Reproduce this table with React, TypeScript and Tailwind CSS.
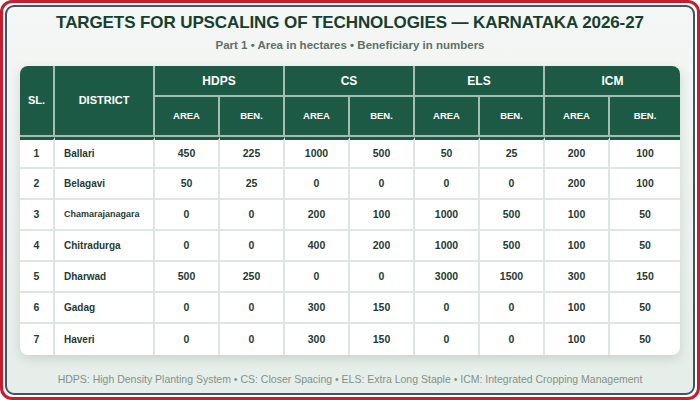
import React from "react";

type Row = { sl: number; name: string; small?: boolean; v: number[] };

const rows: Row[] = [
  { sl: 1, name: "Ballari", v: [450, 225, 1000, 500, 50, 25, 200, 100] },
  { sl: 2, name: "Belagavi", v: [50, 25, 0, 0, 0, 0, 200, 100] },
  { sl: 3, name: "Chamarajanagara", small: true, v: [0, 0, 200, 100, 1000, 500, 100, 50] },
  { sl: 4, name: "Chitradurga", v: [0, 0, 400, 200, 1000, 500, 100, 50] },
  { sl: 5, name: "Dharwad", v: [500, 250, 0, 0, 3000, 1500, 300, 150] },
  { sl: 6, name: "Gadag", v: [0, 0, 300, 150, 0, 0, 100, 50] },
  { sl: 7, name: "Haveri", v: [0, 0, 300, 150, 0, 0, 100, 50] },
];

const groups = ["HDPS", "CS", "ELS", "ICM"];

export default function App() {
  return (
    <div
      className="w-[700px] h-[400px] bg-white border-[3px] border-[#c41f30] rounded-[12px] p-[2px]"
      style={{ fontFamily: '"Liberation Sans", Arial, sans-serif' }}
    >
      <div className="w-full h-full border-2 border-[#44535f] rounded-[9px] bg-gradient-to-b from-[#f4f7f5] to-[#e6eee9] flex flex-col items-center">
        <h1 className="mt-[5px] text-[17px] leading-[22px] font-bold tracking-[-0.1px] text-[#173e2f] text-center">
          TARGETS FOR UPSCALING OF TECHNOLOGIES — KARNATAKA 2026-27
        </h1>
        <p className="mt-[3px] text-[11.5px] leading-[16px] font-bold text-[#5f7068] text-center">
          Part 1 • Area in hectares • Beneficiary in numbers
        </p>
        <div className="mt-[13px] w-[660px] rounded-[8px] overflow-hidden bg-white shadow-[0_4px_12px_rgba(30,70,50,0.16)]">
          <table className="w-full table-fixed border-separate border-spacing-0">
            <colgroup>
              <col className="w-[35px]" />
              <col className="w-[100px]" />
              <col className="w-[65px]" />
              <col className="w-[65px]" />
              <col className="w-[65px]" />
              <col className="w-[65px]" />
              <col className="w-[65px]" />
              <col className="w-[65px]" />
              <col className="w-[65px]" />
              <col />
            </colgroup>
            <thead className="bg-[#1d5a45] text-white">
              <tr>
                <th
                  rowSpan={2}
                  className="border-r-2 border-b-2 border-[#a4bfb2] text-[11px] font-bold p-0"
                >
                  SL.
                </th>
                <th
                  rowSpan={2}
                  className="border-r-2 border-b-2 border-[#a4bfb2] text-[11px] font-bold p-0"
                >
                  DISTRICT
                </th>
                {groups.map((g, i) => (
                  <th
                    key={g}
                    colSpan={2}
                    className={`h-[31px] border-b-2 border-[#a4bfb2] text-[12px] font-bold p-0 ${
                      i < 3 ? "border-r-2" : ""
                    }`}
                  >
                    {g}
                  </th>
                ))}
              </tr>
              <tr>
                {groups.map((g, i) => (
                  <React.Fragment key={g}>
                    <th className="h-[40px] border-r-2 border-b-2 border-[#a4bfb2] text-[9.5px] font-bold p-0">
                      AREA
                    </th>
                    <th
                      className={`h-[40px] border-b-2 border-[#a4bfb2] text-[9.5px] font-bold p-0 ${
                        i < 3 ? "border-r-2" : ""
                      }`}
                    >
                      BEN.
                    </th>
                  </React.Fragment>
                ))}
              </tr>
            </thead>
            <tbody className="text-[#1f3b32] font-bold">
              {rows.map((r, ri) => {
                const first = ri === 0;
                const last = ri === rows.length - 1;
                const base = `p-0 border-[#dde6e1] ${last ? "" : "border-b-2"} ${
                  first ? "h-[32px] border-t-[3px] border-t-[#1d5a45]" : "h-[31px]"
                }`;
                return (
                  <tr key={r.sl}>
                    <td className={`${base} border-r-2 text-center text-[10.5px]`}>{r.sl}</td>
                    <td
                      className={`${base} border-r-2 text-left pl-[9px] ${
                        r.small ? "text-[9px]" : "text-[10px]"
                      }`}
                    >
                      {r.name}
                    </td>
                    {r.v.map((n, i) => (
                      <td
                        key={i}
                        className={`${base} ${i < 7 ? "border-r-2" : ""} text-center text-[10.5px]`}
                      >
                        {n}
                      </td>
                    ))}
                  </tr>
                );
              })}
            </tbody>
          </table>
        </div>
        <p className="mt-[17px] text-[10.5px] leading-[14px] text-[#858f8a] text-center">
          HDPS: High Density Planting System • CS: Closer Spacing • ELS: Extra Long Staple • ICM: Integrated Cropping Management
        </p>
      </div>
    </div>
  );
}
